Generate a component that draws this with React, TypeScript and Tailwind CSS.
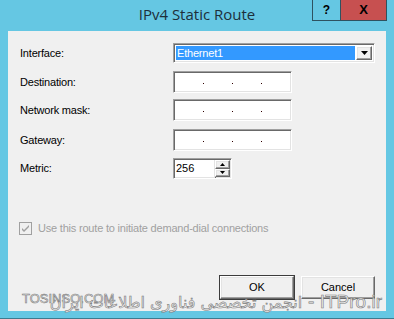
import React from "react";

const sunken =
  "border border-t-[#a0a0a0] border-l-[#a0a0a0] border-b-white border-r-white shadow-[inset_1px_1px_0_#696969,inset_-1px_-1px_0_#e3e3e3] bg-white";
const raised =
  "border border-t-white border-l-white border-b-[#696969] border-r-[#696969] shadow-[inset_-1px_-1px_0_#a0a0a0,inset_1px_1px_0_#e3e3e3] bg-[#f0f0f0]";

function Label({ children }: { children: React.ReactNode }) {
  return <div className="w-[153px] text-[11px] tracking-[-0.2px] text-black leading-none">{children}</div>;
}

function IpBox() {
  return (
    <div className={`${sunken} w-[119px] h-[22px]`}>
      <div className="flex items-center h-full pl-[29px] gap-[28px] pt-[3px]">
        <span className="w-px h-px bg-[#300000]" />
        <span className="w-px h-px bg-[#300000]" />
        <span className="w-px h-px bg-[#300000]" />
      </div>
    </div>
  );
}

export default function App() {
  return (
    <div
      className="relative w-[394px] h-[319px] bg-[#65c7e3] flex flex-col border-b border-[#3d7b8f] overflow-hidden"
      style={{ fontFamily: '"Liberation Sans", Arial, sans-serif' }}
    >
      {/* Title bar */}
      <div className="relative h-[31px] flex items-center justify-center pb-[3px]">
        <span
          className="text-[15px] text-[#1d2f3a]"
          style={{ fontFamily: '"Open Sans", "Noto Sans", sans-serif' }}
        >
          IPv4 Static Route
        </span>
        <div className="absolute top-0 right-[7px] flex">
          <div className="w-[29px] h-[21px] border border-[#2e5260] border-t-0 flex items-center justify-center text-[12px] font-bold text-black">
            ?
          </div>
          <div className="w-[46px] h-[21px] bg-[#c75050] border border-[#2e5260] border-t-0 border-l-0 flex items-center justify-center text-[13px] font-bold text-black">
            X
          </div>
        </div>
      </div>

      {/* Client area */}
      <div className="mx-[8px] h-[280px] bg-[#f0f0f0] flex flex-col pl-[12px]">
        <div className="mt-[12px] h-[20px] flex items-center">
          <Label>Interface:</Label>
          <div className={`${sunken} w-[202px] h-[20px] flex items-stretch p-[2px]`}>
            <div className="flex-1 bg-[#3399ff] text-white text-[11px] tracking-[-0.2px] leading-none flex items-center pl-[1px] mr-[1px]">
              Ethernet1
            </div>
            <div className={`${raised} w-[16px] flex items-center justify-center`}>
              <svg width="7" height="4" viewBox="0 0 7 4">
                <path d="M0 0h7L3.5 4z" fill="#000" />
              </svg>
            </div>
          </div>
        </div>
        <div className="mt-[8px] h-[22px] flex items-center">
          <Label>Destination:</Label>
          <IpBox />
        </div>
        <div className="mt-[6px] h-[22px] flex items-center">
          <Label>Network mask:</Label>
          <IpBox />
        </div>
        <div className="mt-[8px] h-[22px] flex items-center">
          <Label>Gateway:</Label>
          <IpBox />
        </div>
        <div className="mt-[7px] h-[21px] flex items-center">
          <Label>Metric:</Label>
          <div className="flex h-[21px]">
            <div className={`${sunken} w-[42px] h-[21px] border-r-0 text-[11px] leading-none flex items-center pl-[2px] text-black`}>
              256
            </div>
            <div className={`${sunken} w-[17px] h-[21px] border-l-0 shadow-[inset_0_1px_0_#696969,inset_-1px_-1px_0_#e3e3e3] bg-[#f0f0f0] flex flex-col justify-center pr-[1px] py-[1px]`}>
              <div className={`${raised} flex-1 flex items-center justify-center`}>
                <svg width="5" height="3" viewBox="0 0 5 3">
                  <path d="M2.5 0L5 3H0z" fill="#000" />
                </svg>
              </div>
              <div className={`${raised} flex-1 flex items-center justify-center`}>
                <svg width="5" height="3" viewBox="0 0 5 3">
                  <path d="M0 0h5L2.5 3z" fill="#000" />
                </svg>
              </div>
            </div>
          </div>
        </div>

        <div className="mt-[43px] h-[13px] flex items-center">
          <div className="w-[13px] h-[13px] border border-[#a0a0a0] bg-[#f0f0f0] flex items-center justify-center ml-[-1px]">
            <svg width="9" height="9" viewBox="0 0 9 9">
              <path d="M1 4l2 2 5-5v2l-5 5-2-2z" fill="#a0a0a0" />
            </svg>
          </div>
          <span className="ml-[6px] text-[11px] tracking-[-0.2px] leading-none text-[#a0a0a0]">
            Use this route to initiate demand-dial connections
          </span>
        </div>

        <div className="mt-[41px] flex justify-end gap-[7px] pr-[11px]">
          <button className={`${raised} w-[74px] h-[23px] text-[11px] text-black outline outline-1 outline-[#3c3c3c]`}>
            OK
          </button>
          <button className={`${raised} w-[74px] h-[23px] text-[11px] text-black`}>Cancel</button>
        </div>
      </div>

      {/* Watermark */}
      <div
        className="absolute left-[22px] top-[289px] text-[13px] text-[#f2f2f2] [-webkit-text-stroke:0.6px_#7a7a7a] whitespace-nowrap"
        style={{ fontFamily: '"Liberation Sans", sans-serif' }}
      >
        TOSINSO.COM
      </div>
      <div
        className="absolute right-[12px] top-[288px] flex items-baseline text-[#f2f2f2] [-webkit-text-stroke:0.6px_#7a7a7a] whitespace-nowrap"
        style={{ direction: "ltr" }}
      >
        <span
          className="text-[16px]"
          style={{ fontFamily: '"DejaVu Sans", "Noto Sans", sans-serif' }}
        >
          انجمن تخصصی فناوری اطلاعات ایران
        </span>
        <span
          className="text-[19px] ml-[6px]"
          style={{ fontFamily: '"Liberation Sans", sans-serif' }}
        >
          - ITPro.ir
        </span>
      </div>
    </div>
  );
}
